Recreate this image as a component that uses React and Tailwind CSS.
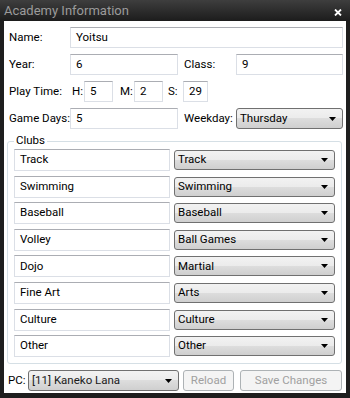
import React from "react";

const inputCls =
  "h-[21px] border border-[#dbdfe6] border-t-[#abadb3] bg-white pl-[5px] flex items-center text-black whitespace-nowrap";

function TextBox({ value, className = "" }) {
  return <div className={`${inputCls} ${className}`}>{value}</div>;
}

function Arrow() {
  return (
    <svg width="7" height="4" viewBox="0 0 7 4" className="shrink-0">
      <path d="M0 0H7L3.5 4Z" fill="#000" />
    </svg>
  );
}

function Combo({ value, className = "", textClass = "text-black" }) {
  return (
    <div
      className={`flex items-center justify-between rounded-[3px] border border-[#707070] bg-[linear-gradient(#f2f2f2_0%,#ebebeb_50%,#dddddd_50%,#cfcfcf_100%)] pl-[3px] pr-[6px] ${className}`}
    >
      <span className={`whitespace-nowrap ${textClass}`}>{value}</span>
      <Arrow />
    </div>
  );
}

const clubs = [
  ["Track", "Track"],
  ["Swimming", "Swimming"],
  ["Baseball", "Baseball"],
  ["Volley", "Ball Games"],
  ["Dojo", "Martial"],
  ["Fine Art", "Arts"],
  ["Culture", "Culture"],
  ["Other", "Other"],
];

export default function App() {
  return (
    <div className="flex h-[398px] w-[350px] flex-col bg-[#1e1e1e] font-['Roboto',sans-serif] text-[11.5px] leading-none text-black">
      {/* title bar */}
      <div className="flex h-[21px] shrink-0 items-center justify-between bg-[linear-gradient(#3e3e3e,#1c1c1c)] pl-[4px] pr-[8px]">
        <span className="text-[13px] text-[#9b9b9b]">Academy Information</span>
        <svg width="8" height="7" viewBox="0 0 8 7" className="mt-[3px]">
          <path d="M1 0.5L7 6.5M7 0.5L1 6.5" stroke="#fff" strokeWidth="1.8" />
        </svg>
      </div>

      <div className="mx-[4px] mb-[5px] flex flex-1 flex-col bg-white pl-[5px] pr-[3px] pt-[6px]">
        <div className="flex flex-col gap-[6px] whitespace-nowrap">
          <div className="flex items-center">
            <span className="w-[61px] shrink-0">Name:</span>
            <TextBox value="Yoitsu" className="flex-1" />
          </div>
          <div className="flex items-center">
            <span className="w-[61px] shrink-0">Year:</span>
            <TextBox value="6" className="w-[108px]" />
            <span className="ml-[6px] w-[52px] shrink-0">Class:</span>
            <TextBox value="9" className="flex-1" />
          </div>
          <div className="flex items-center">
            <span className="w-[63px] shrink-0">Play Time:</span>
            <span className="w-[12px] shrink-0">H:</span>
            <TextBox value="5" className="w-[29px]" />
            <span className="ml-[7px] w-[14px] shrink-0">M:</span>
            <TextBox value="2" className="w-[29px]" />
            <span className="ml-[5px] w-[15px] shrink-0">S:</span>
            <TextBox value="29" className="w-[25px]" />
          </div>
          <div className="flex items-center">
            <span className="w-[61px] shrink-0">Game Days:</span>
            <TextBox value="5" className="w-[108px]" />
            <span className="ml-[6px] w-[52px] shrink-0">Weekday:</span>
            <Combo value="Thursday" className="h-[21px] flex-1" />
          </div>
        </div>

        {/* clubs group */}
        <div className="relative ml-[-2px] mr-[1px] mt-[12px] h-[223px] rounded-[3px] border border-[#d5dfe5] px-[6px] pt-[7px]">
          <span className="absolute left-[6px] top-[-7px] bg-white px-[2px]">Clubs</span>
          <div className="grid grid-cols-[156px_1fr] gap-x-[4px] gap-y-[4.6px]">
            {clubs.map(([name, cat]) => (
              <React.Fragment key={name}>
                <TextBox value={name} className="h-[22px]" />
                <div className="flex items-center">
                  <Combo value={cat} className="h-[20px] w-full" />
                </div>
              </React.Fragment>
            ))}
          </div>
        </div>

        <div className="mt-[6px] flex items-center whitespace-nowrap">
          <span className="ml-[-1px] w-[20px] shrink-0">PC:</span>
          <Combo
            value="[11] Kaneko Lana"
            className="h-[21px] w-[151px]"
            textClass="text-[#1a1a1a]"
          />
          <div className="ml-[4px] flex h-[21px] w-[51px] items-center justify-center rounded-[3px] border border-[#adb2b5] bg-[#f4f4f4] text-[#a0a0a0]">
            Reload
          </div>
          <div className="ml-[6px] flex h-[21px] w-[102px] items-center justify-center rounded-[3px] border border-[#adb2b5] bg-[#f4f4f4] text-[#a0a0a0]">
            Save Changes
          </div>
        </div>
      </div>
    </div>
  );
}
